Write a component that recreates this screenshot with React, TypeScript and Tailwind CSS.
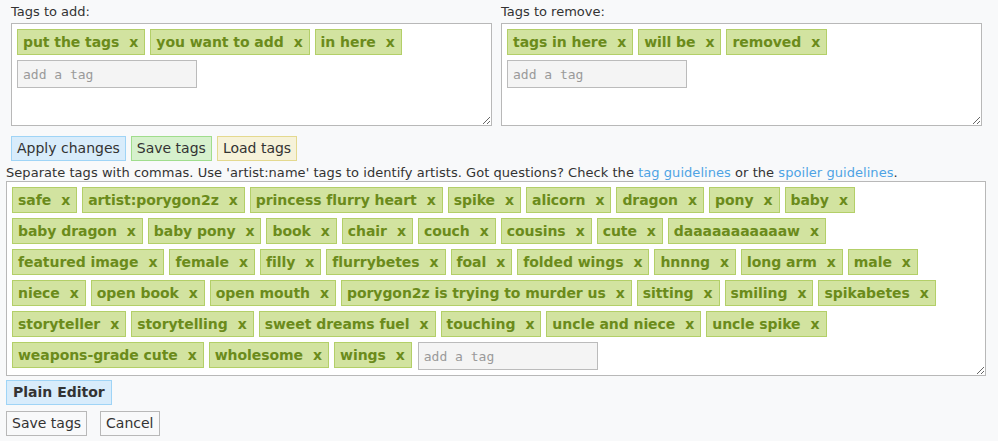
import React from 'react'

const addTags = ['put the tags', 'you want to add', 'in here']
const removeTags = ['tags in here', 'will be', 'removed']

const tagRows = [
  ['safe', 'artist:porygon2z', 'princess flurry heart', 'spike', 'alicorn', 'dragon', 'pony', 'baby'],
  ['baby dragon', 'baby pony', 'book', 'chair', 'couch', 'cousins', 'cute', 'daaaaaaaaaaaw'],
  ['featured image', 'female', 'filly', 'flurrybetes', 'foal', 'folded wings', 'hnnng', 'long arm', 'male'],
  ['niece', 'open book', 'open mouth', 'porygon2z is trying to murder us', 'sitting', 'smiling', 'spikabetes'],
  ['storyteller', 'storytelling', 'sweet dreams fuel', 'touching', 'uncle and niece', 'uncle spike'],
  ['weapons-grade cute', 'wholesome', 'wings'],
]

function Tag({ name }: { name: string }) {
  return (
    <span className="inline-flex items-center h-[26px] pl-[5px] pr-[6px] border border-[#b3cf68] bg-[#d2e3a0] text-[#6b8b1b] text-[14px] font-bold leading-none tracking-[-0.06px] whitespace-nowrap">
      {name}
      <span className="ml-[10px] cursor-pointer">x</span>
    </span>
  )
}

function TagInput() {
  return (
    <input
      placeholder="add a tag"
      className="w-[180px] h-[28px] px-[5px] border border-[#bbbbbb] bg-[#f4f4f4] font-['DejaVu_Sans_Mono',monospace] text-[13px] text-[#555] placeholder:text-[#9a9a9a] outline-none"
    />
  )
}

function SmallEditor({ label, tags }: { label: string; tags: string[] }) {
  return (
    <div className="w-[481px]">
      <div className="pt-[4px] mb-[3px] leading-[16px]">{label}</div>
      <div className="h-[103px] border border-[#b8b8b8] bg-white p-[5px] resize overflow-auto">
        <div className="flex flex-wrap gap-[5px]">
          {tags.map((t) => (
            <Tag key={t} name={t} />
          ))}
        </div>
        <div className="mt-[5px] flex">
          <TagInput />
        </div>
      </div>
    </div>
  )
}

export default function App() {
  return (
    <div className="min-h-screen bg-[#f8f9fa] text-[#333] text-[13px] font-['DejaVu_Sans',Verdana,sans-serif]">
      <div className="pl-[6px] w-[992px]">
        <div className="flex gap-[9px] pl-[5px]">
          <SmallEditor label="Tags to add:" tags={addTags} />
          <SmallEditor label="Tags to remove:" tags={removeTags} />
        </div>

        <div className="flex gap-[5px] pl-[5px] mt-[10px] text-[14px]">
          <button className="h-[25px] px-[5px] border border-[#9fd4f6] bg-[#d8ecfb]">Apply changes</button>
          <button className="h-[25px] px-[5px] border border-[#a0dd8d] bg-[#d6f1cd]">Save tags</button>
          <button className="h-[25px] px-[5px] border border-[#e4d98f] bg-[#f6f2d9]">Load tags</button>
        </div>

        <div className="mt-[4px] leading-[16px] tracking-[0.05px] whitespace-nowrap">
          Separate tags with commas. Use 'artist:name' tags to identify artists. Got questions? Check the{' '}
          <a className="text-[#4ea3e4] cursor-pointer">tag guidelines</a> or the{' '}
          <a className="text-[#4ea3e4] cursor-pointer">spoiler guidelines</a>.
        </div>

        <div className="w-[980px] border border-[#b8b8b8] bg-white p-[5px] resize overflow-auto">
          <div className="flex flex-col gap-[5px]">
            {tagRows.map((row, i) => (
              <div key={i} className="flex gap-[5px] items-start">
                {row.map((t) => (
                  <Tag key={t} name={t} />
                ))}
                {i === tagRows.length - 1 && (
                  <span className="ml-px flex">
                    <TagInput />
                  </span>
                )}
              </div>
            ))}
          </div>
        </div>

        <div className="mt-[4px] flex">
          <button className="h-[25px] px-[6px] border border-[#9fd4f6] bg-[#d8ecfb] text-[14px] font-bold">Plain Editor</button>
        </div>

        <div className="mt-[6px] flex gap-[13px] text-[14px]">
          <button className="h-[25px] px-[5px] border border-[#b8b8b8] bg-[#f8f9fa]">Save tags</button>
          <button className="h-[25px] px-[5px] border border-[#b8b8b8] bg-[#f8f9fa]">Cancel</button>
        </div>
      </div>
    </div>
  )
}
